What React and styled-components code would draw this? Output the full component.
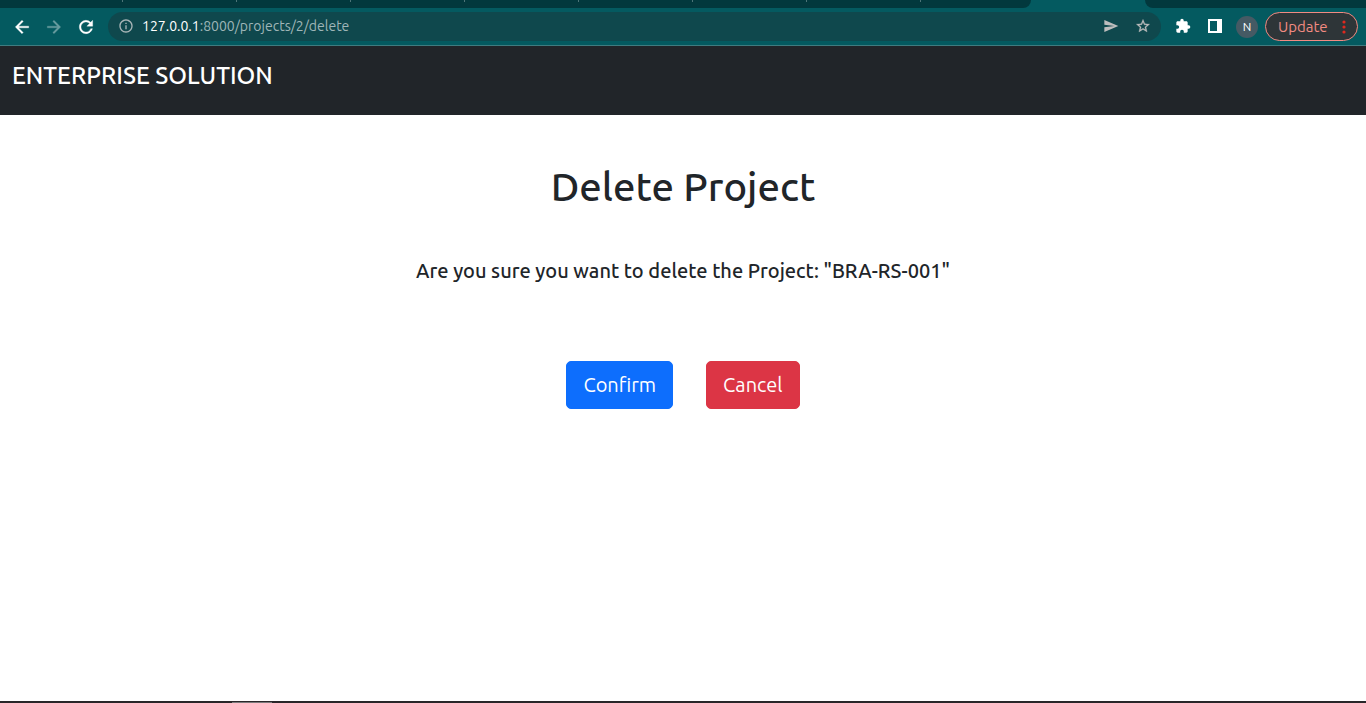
import React from "react";
import styled, { createGlobalStyle } from "styled-components";
import {
  MdArrowBack,
  MdArrowForward,
  MdRefresh,
  MdInfoOutline,
  MdSend,
  MdStarBorder,
  MdExtension,
} from "react-icons/md";

const GlobalStyle = createGlobalStyle`
  *, *::before, *::after { box-sizing: border-box; }
  body {
    margin: 0;
    background: #fff;
    color: #212529;
    font-family: Ubuntu, "Noto Sans", "Open Sans", sans-serif;
  }
  button, input { font-family: inherit; }
`;

const Page = styled.div`
  display: flex;
  flex-direction: column;
  min-height: 100vh;
`;

const TabStrip = styled.div`
  display: flex;
  height: 8px;
  background: #045a60;
`;

const InactiveTabs = styled.div`
  display: flex;
  flex: ${(p) => (p.$fill ? "1 1 0" : "none")};
  padding-left: ${(p) => (p.$fill ? 0 : 9)}px;
  padding-right: ${(p) => (p.$fill ? 0 : 110)}px;
  background: #02383d;
  border-radius: ${(p) => (p.$fill ? "0 0 0 8px" : "0 0 8px 0")};
`;

const Tab = styled.div`
  width: 114px;
  height: 2px;
  border-right: 1px solid #4d7478;
`;

const ActiveTab = styled.div`
  width: 114px;
`;

const Toolbar = styled.div`
  display: flex;
  align-items: center;
  height: 38px;
  padding: 0 8px 0 12px;
  background: #045a60;
  border-bottom: 1px solid #3f7c80;
`;

const IconButton = styled.button`
  display: grid;
  place-items: center;
  flex: none;
  width: 20px;
  height: 20px;
  padding: 0 0 1px;
  margin-right: ${(p) => p.$gap || 0}px;
  border: 0;
  background: none;
  color: ${(p) => p.$color || "#fff"};

  path {
    stroke-width: ${(p) => (p.$bold ? 0.4 : 0)};
  }
  path[fill="none"] {
    stroke: none;
  }
`;

const AddressBar = styled.form`
  display: flex;
  align-items: center;
  flex: 1;
  height: 29px;
  margin-right: 12px;
  padding: 0 8px 1px;
  border-radius: 15px;
  background: #0f484d;
`;

const Address = styled.a`
  flex: 1;
  margin-left: 6px;
  color: #9fb6b8;
  font-size: 14px;
  line-height: 20px;
  text-decoration: none;
`;

const Host = styled.span`
  color: #fff;
`;

const Avatar = styled.button`
  flex: none;
  width: 22px;
  height: 22px;
  margin-right: 7px;
  padding: 0;
  border: 0;
  border-radius: 50%;
  background: #455a64;
  color: #fff;
  font-size: 12px;
  line-height: 20px;
`;

const UpdateButton = styled.button`
  display: flex;
  align-items: center;
  justify-content: space-between;
  flex: none;
  width: 93px;
  height: 29px;
  padding: 0 11px 0 12px;
  border: 1px solid #f28b82;
  border-radius: 15px;
  background: #2e3538;
  color: #f28b82;
  font-size: 15px;
  line-height: 20px;
`;

const Navbar = styled.header`
  height: 69px;
  padding: 12px;
  background: #212529;
`;

const Brand = styled.a`
  display: block;
  color: #fff;
  font-size: 24px;
  font-weight: 500;
  line-height: 36px;
  text-decoration: none;
`;

const Main = styled.main`
  display: flex;
  flex: 1;
  flex-direction: column;
  align-items: center;
  padding: 48px 12px;
`;

const Title = styled.h1`
  margin: 0 0 48px;
  font-size: 40px;
  font-weight: 500;
  line-height: 48px;
`;

const Question = styled.p`
  margin: 0 0 78px;
  font-size: 20px;
  font-weight: 500;
  line-height: 24px;
`;

const Actions = styled.form`
  display: flex;
  gap: 33px;
`;

const ActionButton = styled.button`
  height: 48px;
  padding: 0 16px;
  border: 1px solid ${(p) => p.$color};
  border-radius: 5px;
  background: ${(p) => p.$color};
  color: #fff;
  font-size: 20px;
  line-height: 30px;
`;

const Dock = styled.footer`
  height: 2px;
  padding: 1px 0 0 232px;
  background: #292629;
`;

const DockItem = styled.div`
  width: 40px;
  height: 1px;
  background: #7b797b;
`;

const tabs = [1, 2, 3, 4, 5, 6, 7, 8];

function SidePanelIcon() {
  return (
    <svg width="14" height="14" viewBox="0 0 14 14" aria-hidden="true">
      <path fill="currentColor" fillRule="evenodd" d="M0 0h14v14H0zM2 2v10h7V2z" />
    </svg>
  );
}

function MenuDots() {
  return (
    <svg width="4" height="14" viewBox="0 0 4 14" fill="#e0281e" aria-hidden="true">
      <circle cx="2" cy="2" r="1.6" />
      <circle cx="2" cy="7" r="1.6" />
      <circle cx="2" cy="12" r="1.6" />
    </svg>
  );
}

export default function App() {
  return (
    <>
      <GlobalStyle />
      <Page>
        <TabStrip>
          <InactiveTabs>
            {tabs.map((tab) => (
              <Tab key={tab} />
            ))}
          </InactiveTabs>
          <ActiveTab />
          <InactiveTabs $fill />
        </TabStrip>
        <Toolbar>
          <IconButton $bold $gap={12} aria-label="Back"><MdArrowBack size={20} /></IconButton>
          <IconButton $bold $gap={12} $color="#689c9f" aria-label="Forward"><MdArrowForward size={20} /></IconButton>
          <IconButton $bold $gap={12} aria-label="Reload"><MdRefresh size={20} /></IconButton>
          <AddressBar>
            <IconButton type="button" $color="#a9b5b7" aria-label="Site information"><MdInfoOutline size={16} /></IconButton>
            <Address href="#"><Host>127.0.0.1</Host>:8000/projects/2/delete</Address>
            <IconButton type="button" $gap={12} $color="#bdbdbd" aria-label="Share"><MdSend size={16} /></IconButton>
            <IconButton $bold type="button" $color="#bdbdbd" aria-label="Bookmark"><MdStarBorder size={16} /></IconButton>
          </AddressBar>
          <IconButton $gap={12} aria-label="Extensions"><MdExtension size={16} /></IconButton>
          <IconButton $gap={11} aria-label="Side panel"><SidePanelIcon /></IconButton>
          <Avatar aria-label="Profile">N</Avatar>
          <UpdateButton>Update<MenuDots /></UpdateButton>
        </Toolbar>
        <Navbar>
          <Brand href="#">ENTERPRISE SOLUTION</Brand>
        </Navbar>
        <Main>
          <Title>Delete Project</Title>
          <Question>Are you sure you want to delete the Project: "BRA-RS-001"</Question>
          <Actions>
            <ActionButton type="button" $color="#0d6efd">Confirm</ActionButton>
            <ActionButton type="button" $color="#dc3545">Cancel</ActionButton>
          </Actions>
        </Main>
        <Dock><DockItem /></Dock>
      </Page>
    </>
  );
}
